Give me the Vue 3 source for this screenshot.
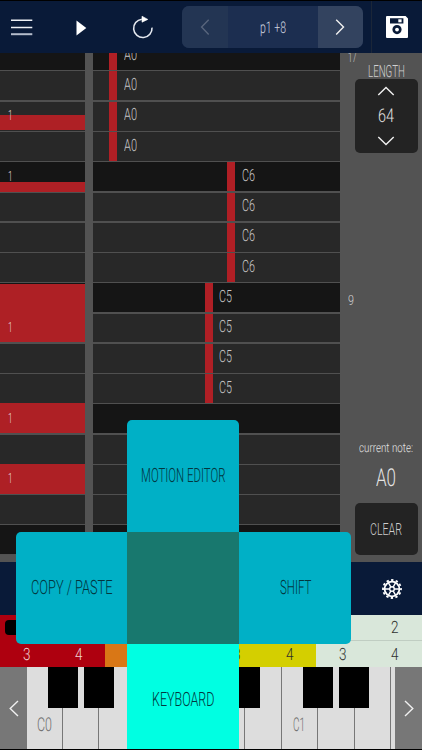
<script setup>
import { h, ref } from "vue";

// condensed lettering: w = drawn width, cap = height of the capitals
const Label = (props) =>
  h(
    "svg",
    { class: "label", width: props.w, height: props.cap },
    h(
      "text",
      {
        x: 0,
        y: props.cap,
        "font-size": props.cap / 0.711,
        textLength: props.w,
        lengthAdjust: "spacingAndGlyphs",
      },
      props.text
    )
  );
Label.props = ["text", "w", "cap"];

const pattern = ref("p1 +8");
const length = ref(64);
const currentNote = ref("A0");

// gate: top and bottom of the red block inside the step
const gates = {
  2: { from: 14.5, to: 29.3, label: true },
  4: { from: 20.6, to: 30.3, label: true },
  8: { from: 2, to: 30.3 },
  9: { from: 0, to: 29.5, label: true },
  12: { from: 0, to: 29.6, label: true },
  14: { from: 0, to: 30, label: true },
};
const notes = [
  { name: "A0", left: 16.5 },
  { name: "C6", left: 134.5 },
  { name: "C5", left: 112 },
];

const steps = [];
for (let i = 0; i < 17; i++) {
  steps.push({
    beat: i % 4 === 0,
    gate: gates[i],
    note: notes[Math.floor(i / 4)],
  });
}

const pads = [
  ["1", "2", "1", "2", "1", "2", "1", "2"],
  ["3", "4", "3", "4", "3", "4", "3", "4"],
];
const padColors = ["red", "orange", "yellow", "mint"];

const whiteKeys = ["C0", "", "", "", "", "", "", "C1", "", "", ""];
const blackKeys = [20.7, 57.2, 130, 166.3, 202.7, 275.6, 312.2];
</script>

<template>
  <div class="app">
    <header class="topbar">
      <svg class="menu-icon" width="22" height="17" viewBox="0 0 22 17">
        <path d="M0 1.2h21.3M0 8.4h21.3" stroke="#eef0f4" stroke-width="1.5" />
        <path d="M0 15.2h21.3" stroke="#b4bccb" stroke-width="2" />
      </svg>
      <svg class="play-icon" width="11" height="16" viewBox="0 0 11 16">
        <path d="M.5.4 10.3 8 .5 15.4z" fill="#fff" />
      </svg>
      <svg class="loop-icon" width="22" height="24" viewBox="0 0 22 24">
        <path
          d="M9.8 4.2A9.2 9.2 0 1 0 20 12.6"
          fill="none"
          stroke="#e4e8ef"
          stroke-width="1.6"
        />
        <path d="M10 1.2 15.8 4.4 10 7.2z" fill="#fff" stroke="#fff" stroke-width=".6" />
      </svg>
      <div class="pattern">
        <button class="prev">
          <svg width="10" height="18" viewBox="0 0 10 18">
            <path d="M8.7 1.8 1.6 9l7.1 7.4" class="chevron" />
          </svg>
        </button>
        <div class="pattern-name"><Label :text="pattern" :w="26" :cap="11.5" /></div>
        <button class="next">
          <svg width="10" height="18" viewBox="0 0 10 18">
            <path d="M1.2 1.8 8.5 9l-7.3 7.4" class="chevron" />
          </svg>
        </button>
      </div>
      <div class="save">
        <svg width="22" height="22" viewBox="0 0 22 22">
          <path
            fill="#fff"
            fill-rule="evenodd"
            d="M1 0h18.6L22 2.4V21a1 1 0 0 1-1 1H1a1 1 0 0 1-1-1V1a1 1 0 0 1 1-1zM4 2.2v5.2h13.4V2.2zM11 9a4.6 4.6 0 1 0 0 9.2a4.6 4.6 0 0 0 0-9.2z"
          />
          <path d="M12.3 3.3h3.3v3h-3.3z" fill="#fff" />
          <circle cx="11" cy="13.6" r="1.9" fill="#fff" />
        </svg>
      </div>
    </header>

    <main class="editor">
      <div class="gates">
        <div v-for="(step, i) in steps" :key="i" class="step" :class="{ beat: step.beat }">
          <div
            v-if="step.gate"
            class="gate"
            :style="{
              marginTop: step.gate.from + 'px',
              height: step.gate.to - step.gate.from + 'px',
            }"
          ></div>
          <Label v-if="step.gate && step.gate.label" class="count" text="1" :w="4.5" :cap="10" />
        </div>
      </div>
      <div class="notes">
        <div v-for="(step, i) in steps" :key="i" class="step" :class="{ beat: step.beat }">
          <template v-if="step.note">
            <div class="bar" :style="{ marginLeft: step.note.left + 'px' }"></div>
            <Label class="note-name" :text="step.note.name" :w="13" :cap="12" />
          </template>
        </div>
      </div>
      <aside class="side">
        <div class="ruler">
          <Label class="mark-17" text="17" :w="8.5" :cap="10" />
          <Label class="mark-9" text="9" :w="6" :cap="10" />
        </div>
        <div class="controls">
          <Label class="length-title" text="LENGTH" :w="37" :cap="12" />
          <div class="length-box">
            <svg width="18" height="10" viewBox="0 0 18 10">
              <path d="M1.3 9 9 1.5 16.7 9" class="chevron" />
            </svg>
            <Label :text="String(length)" :w="16" :cap="13.5" />
            <svg width="18" height="10" viewBox="0 0 18 10">
              <path d="M1.3 1 9 8.5 16.7 1" class="chevron" />
            </svg>
          </div>
          <Label class="current-title" text="current note:" :w="54" :cap="9" />
          <Label class="current" :text="currentNote" :w="20" :cap="17.5" />
          <button class="clear"><Label text="CLEAR" :w="32" :cap="12" /></button>
        </div>
      </aside>
    </main>

    <nav class="toolbar">
      <svg width="22" height="22" viewBox="-11 -11 22 22">
        <circle r="7.4" fill="none" stroke="#fff" stroke-width="1.8" />
        <circle r="2.3" fill="none" stroke="#fff" stroke-width="1.4" />
        <circle
          r="9"
          fill="none"
          stroke="#fff"
          stroke-width="1.8"
          stroke-dasharray="2.4 2.312"
          stroke-dashoffset="1.2"
        />
        <path
          d="M2.5 0H7M-2.5 0H-7M1.25 2.16 3.5 6.06M-1.25 2.16-3.5 6.06M1.25-2.16 3.5-6.06M-1.25-2.16-3.5-6.06"
          stroke="#fff"
          stroke-width="1.4"
        />
      </svg>
    </nav>

    <section class="pads">
      <template v-for="(row, r) in pads" :key="r">
        <div
          v-for="(pad, i) in row"
          :key="r + '-' + i"
          class="pad"
          :class="[padColors[Math.floor(i / 2)], { active: r === 0 && i === 0, upper: r === 0 }]"
        >
          <Label :text="pad" :w="7.5" :cap="12" />
        </div>
      </template>
    </section>

    <section class="piano">
      <button class="scroll">
        <svg width="10" height="17" viewBox="0 0 10 17">
          <path d="M9 1 1.2 8.5 9 16" class="chevron" />
        </svg>
      </button>
      <div class="keys">
        <div v-for="(key, i) in whiteKeys" :key="i" class="key">
          <Label v-if="key" :text="key" :w="key === 'C0' ? 15 : 12" :cap="13.5" />
        </div>
        <div v-for="x in blackKeys" :key="x" class="black-key" :style="{ left: x + 'px' }"></div>
      </div>
      <button class="scroll">
        <svg width="10" height="17" viewBox="0 0 10 17">
          <path d="M1 1 8.8 8.5 1 16" class="chevron" />
        </svg>
      </button>
    </section>

    <div class="cross-menu">
      <div class="tile up"><Label text="MOTION EDITOR" :w="84.5" :cap="14" /></div>
      <div class="tile left"><Label text="COPY / PASTE" :w="81.5" :cap="14" /></div>
      <div class="tile center"></div>
      <div class="tile right"><Label text="SHIFT" :w="31.5" :cap="14" /></div>
      <div class="tile down"><Label text="KEYBOARD" :w="62.5" :cap="14" /></div>
    </div>
  </div>
</template>

<style>
body {
  margin: 0;
  background: #000;
}
</style>

<style scoped>
.app {
  position: relative;
  width: 422px;
  height: 750px;
  overflow: hidden;
  box-sizing: border-box;
  padding-top: 1px;
  background: #000;
  font-family: Roboto, "Liberation Sans", sans-serif;
  font-weight: 300;
  text-rendering: geometricPrecision;
}
.app * {
  box-sizing: border-box;
}
svg {
  display: block;
  flex: none;
}
.label {
  overflow: visible;
  fill: currentColor;
  /* own layer keeps the thin strokes in greyscale antialiasing */
  opacity: 0.99;
}
.chevron {
  fill: none;
  stroke: #f0f0f0;
  stroke-width: 1.4;
}
button {
  border: 0;
  padding: 0;
  font: inherit;
  display: flex;
  align-items: center;
  justify-content: center;
}

/* top bar */
.topbar {
  height: 52px;
  display: flex;
  align-items: center;
  background: #091a38;
}
.menu-icon {
  margin-left: 11px;
}
.play-icon {
  margin: 1px 0 0 43px;
}
.loop-icon {
  margin-left: 45px;
}
.pattern {
  display: flex;
  width: 181px;
  height: 42px;
  margin-left: 28px;
  border-radius: 7px;
  overflow: hidden;
  background: #1c2e50;
}
.prev,
.next {
  width: 45.5px;
  background: #233553;
}
.prev .chevron {
  stroke: #58657c;
}
.next {
  background: #33435f;
}
.pattern-name {
  flex: 1;
  display: flex;
  align-items: center;
  justify-content: center;
  padding-bottom: 1px;
  color: #d3d8e0;
}
.save {
  display: flex;
  align-items: center;
  align-self: stretch;
  margin-left: 8px;
  padding-left: 14px;
  border-left: 1px solid #1b2638;
}

/* step editor */
.editor {
  display: flex;
  height: 509px;
  padding-bottom: 7px;
  overflow: hidden;
  background: #535353;
}
.gates,
.notes {
  overflow: hidden;
}
.gates {
  width: 84.5px;
}
.notes {
  width: 247.5px;
  margin-left: 8px;
}
.step {
  display: flex;
  position: relative;
  height: 30.27px;
  background: #282828;
}
.step:first-child {
  margin-top: -12.8px;
}
.step::after {
  content: "";
  position: absolute;
  left: 0;
  right: 0;
  bottom: -1px;
  height: 1.4px;
  z-index: 1;
  background: #505050;
}
.step.beat {
  background: #151515;
}
.gate {
  width: 100%;
  background: #ae2025;
  position: relative;
  z-index: 2;
}
.count {
  position: absolute;
  z-index: 3;
  left: 7.5px;
  top: 9.5px;
  color: #ecdede;
}
.bar {
  width: 8.3px;
  background: #b01f25;
}
.note-name {
  margin: 7.5px 0 0 6.5px;
  color: #cacaca;
}

/* side panel */
.side {
  flex: 1;
  display: flex;
  color: #e6e6e6;
}
.ruler {
  width: 14.5px;
  padding-left: 7.5px;
  color: #d2d2d2;
}
.mark-17 {
  margin-top: -1px;
}
.mark-9 {
  margin-top: 232.5px;
}
.controls {
  width: 63px;
  display: flex;
  flex-direction: column;
  align-items: center;
}
.length-title {
  margin-top: 12px;
  color: #d2d2d2;
}
.length-box {
  width: 63px;
  height: 76px;
  margin-top: 1.5px;
  padding: 7.5px 0;
  display: flex;
  flex-direction: column;
  align-items: center;
  justify-content: space-between;
  border-radius: 5px;
  background: #232323;
}
.length-box .label {
  margin-top: -2px;
}
.current-title {
  margin-top: 290px;
}
.current {
  margin-top: 16px;
}
.clear {
  width: 63px;
  height: 52.5px;
  margin-top: 17px;
  flex: none;
  border-radius: 5px;
  background: #232323;
  color: #d0d0d0;
}

.toolbar {
  height: 53px;
  display: flex;
  align-items: center;
  justify-content: flex-end;
  padding-right: 19.5px;
  background: #091a38;
}

/* pads */
.pads {
  display: grid;
  grid-template-columns: repeat(8, 52.7px);
  grid-template-rows: 25.5px 26.5px;
  background: #d9e7da;
}
.pad {
  display: flex;
  align-items: center;
  justify-content: center;
  color: #2d302e;
}
.red {
  background: #ae000f;
  color: #f0d4d4;
}
.orange {
  background: #d97716;
}
.yellow {
  background: #d4cf00;
}
.mint {
  background: #d9e7da;
}
.mint.upper {
  border-bottom: 1px solid #c0cdc2;
}
.active::before {
  content: "";
  width: 42px;
  height: 15px;
  border-radius: 4px;
  background: #000;
}
.active .label {
  display: none;
}

/* keyboard */
.piano {
  display: flex;
  height: 82px;
}
.scroll {
  width: 27px;
  flex: none;
  background: #777;
}
.keys {
  flex: 1;
  display: flex;
  position: relative;
  overflow: hidden;
}
.key {
  flex: none;
  width: 36.45px;
  padding: 50px 0 0 9.5px;
  border-right: 1.3px solid #777;
  background: #ddd;
  color: #707070;
}
.key:first-child {
  width: 36px;
}
.key:nth-child(8) {
  padding-left: 11.5px;
}
.black-key {
  position: absolute;
  top: 0;
  width: 30px;
  height: 40.5px;
  background: #000;
}

/* pop-up menu laid over the editor */
.cross-menu {
  position: absolute;
  z-index: 5;
  left: 15.5px;
  top: 420.3px;
  display: grid;
  grid-template-columns: repeat(3, 111.8px);
  grid-template-rows: 112px 111.7px 105px;
  grid-template-areas:
    ". up ."
    "left center right"
    ". down .";
}
.tile {
  display: flex;
  align-items: center;
  justify-content: center;
  padding-bottom: 2px;
  background: #00b0c6;
  color: #04353d;
}
.up {
  grid-area: up;
  border-radius: 5px 5px 0 0;
}
.left {
  grid-area: left;
  border-radius: 5px 0 0 5px;
}
.center {
  grid-area: center;
  background: #18786e;
}
.right {
  grid-area: right;
  border-radius: 0 5px 5px 0;
  padding-left: 1px;
}
.down {
  grid-area: down;
  padding: 5px 0 0;
  background: #00ffe2;
}
</style>
